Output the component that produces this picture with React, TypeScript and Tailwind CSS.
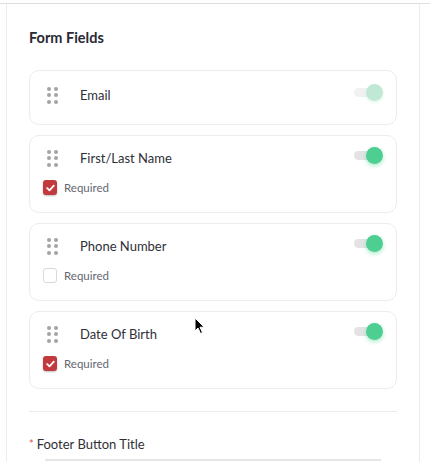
import React from 'react';

interface Field {
  label: string;
  enabled: boolean;
  faded?: boolean;
  required?: boolean;
}

const fields: Field[] = [
  { label: 'Email', enabled: true, faded: true },
  { label: 'First/Last Name', enabled: true, required: true },
  { label: 'Phone Number', enabled: true, required: false },
  { label: 'Date Of Birth', enabled: true, required: true },
];

function DragHandle() {
  return (
    <div className="grid grid-cols-2 gap-x-[3.5px] gap-y-[2.5px] w-[11px]">
      {Array.from({ length: 6 }).map((_, i) => (
        <span key={i} className="block w-[4px] h-[4px] rounded-full bg-[#a3a3a3]" />
      ))}
    </div>
  );
}

function Toggle({ faded }: { faded?: boolean }) {
  return (
    <div className="relative w-[29px] h-[17px] -mt-[6px]">
      <div
        className={`absolute left-0 top-[4px] w-[22px] h-[9px] rounded-full ${faded ? 'bg-[#f1f1f1]' : 'bg-[#e3e3e3]'}`}
      />
      <div
        className={`absolute right-0 top-0 w-[17px] h-[17px] rounded-full ${
          faded
            ? 'bg-[#bfe9d4] shadow-[0_2px_3px_rgba(76,208,143,0.15)]'
            : 'bg-[#4ccf90] shadow-[0_2px_4px_rgba(76,208,143,0.45)]'
        }`}
      />
    </div>
  );
}

function Checkbox({ checked }: { checked?: boolean }) {
  if (checked) {
    return (
      <span className="flex items-center justify-center w-[14px] h-[15px] rounded-[3px] bg-[#c23a3e] shadow-[0_1px_2px_rgba(0,0,0,0.25)]">
        <svg width="9" height="8" viewBox="0 0 9 8" fill="none">
          <path d="M1.2 4.2 L3.5 6.3 L7.8 1.6" stroke="white" strokeWidth="1.8" strokeLinecap="round" strokeLinejoin="round" />
        </svg>
      </span>
    );
  }
  return <span className="block w-[14px] h-[15px] rounded-[3px] border border-[#d9d9d9] bg-white" />;
}

function FieldCard({ field }: { field: Field }) {
  const hasRequired = field.required !== undefined;
  return (
    <div className={`border border-[#ececec] rounded-[10px] bg-white pl-[17px] pr-[13px] ${hasRequired ? 'pt-[12px] pb-[17px]' : 'pt-[14px] pb-[19px]'}`}>
      <div className="flex items-center h-[20px]">
        <DragHandle />
        <span className="ml-[22px] text-[13px] leading-[20px] text-[#2f2f37]">{field.label}</span>
        <div className="ml-auto">
          <Toggle faded={field.faded} />
        </div>
      </div>
      {hasRequired && (
        <div className="flex items-center h-[15px] mt-[12px] -ml-[4px] gap-[7px]">
          <Checkbox checked={field.required} />
          <span className="text-[11.5px] leading-[15px] text-[#666670]">Required</span>
        </div>
      )}
    </div>
  );
}

export default function App() {
  return (
    <div className="relative w-[430px] h-[462px] overflow-hidden bg-white" style={{ fontFamily: 'Lato, "Open Sans", sans-serif' }}>
      <div className="mt-[3px] border-t border-[#dedede]">
        <div className="ml-[6px] mr-[10px] border-x border-[#ececec] h-[470px] px-[22px] pt-[24px]">
          <h2 className="text-[14.5px] font-bold text-[#2a2a35] leading-[20px]">Form Fields</h2>
          <div className="mt-[22px] flex flex-col gap-[10px]">
            {fields.map(f => (
              <FieldCard key={f.label} field={f} />
            ))}
          </div>
          <div className="mt-[22px] border-t border-[#ececec]" />
          <div className="mt-[22px] flex items-center text-[13px] text-[#2f2f37] leading-[20px]">
            <span className="text-[#d9534f] text-[11px] mr-[3px]">*</span>
            Footer Button Title
          </div>
          <div className="mt-[5px] mx-[16px] h-[36px] border-t-2 border-[#e6e6e6]" />
        </div>
      </div>
      <svg className="absolute left-[194px] top-[317px]" width="12" height="18" viewBox="0 0 12 18">
        <path d="M1 1 L1 14 L4 11 L6.5 16.5 L8.5 15.6 L6 10.2 L10.2 10.2 Z" fill="black" stroke="white" strokeWidth="1" strokeLinejoin="round" />
      </svg>
    </div>
  );
}
